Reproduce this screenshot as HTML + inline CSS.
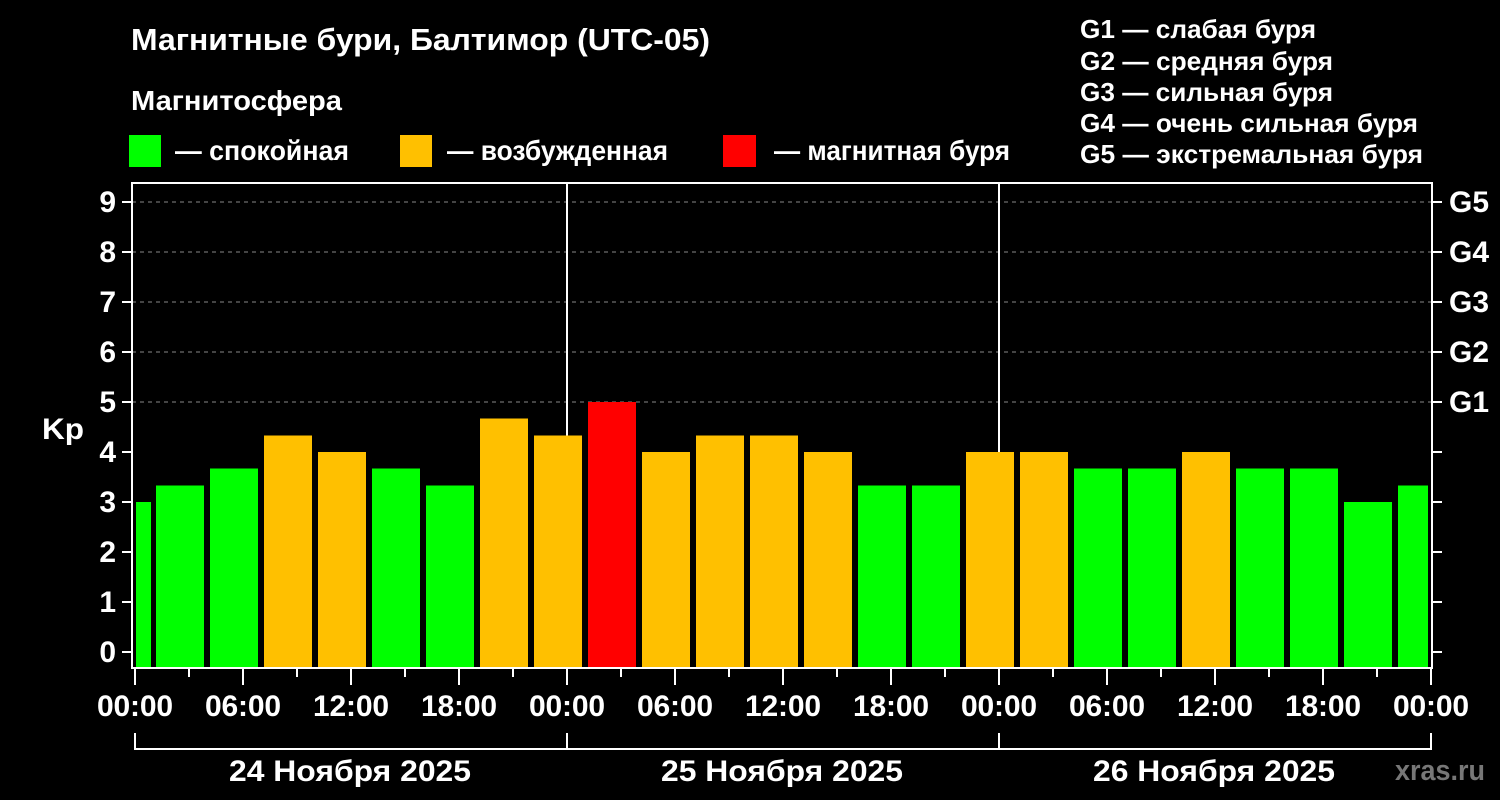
<!DOCTYPE html>
<html><head><meta charset="utf-8"><style>
html,body{margin:0;padding:0;background:#000;width:1500px;height:800px;overflow:hidden}
svg{display:block}
text{font-family:"Liberation Sans",Arial,sans-serif;font-weight:bold;fill:#fff}
</style></head><body>
<svg width="1500" height="800" viewBox="0 0 1500 800" xmlns="http://www.w3.org/2000/svg">
<rect width="1500" height="800" fill="#000"/>
<text x="131" y="50" font-size="31" textLength="579" lengthAdjust="spacingAndGlyphs">Магнитные бури, Балтимор (UTC-05)</text>
<text x="131" y="110" font-size="28" textLength="211" lengthAdjust="spacingAndGlyphs">Магнитосфера</text>
<rect x="129" y="135" width="32" height="32" fill="#00ff00"/>
<text x="175" y="160" font-size="28" textLength="174" lengthAdjust="spacingAndGlyphs">— спокойная</text>
<rect x="400" y="135" width="32" height="32" fill="#ffc000"/>
<text x="447" y="160" font-size="28" textLength="221" lengthAdjust="spacingAndGlyphs">— возбужденная</text>
<rect x="723" y="135" width="33" height="32" fill="#ff0000"/>
<text x="774" y="160" font-size="28" textLength="236" lengthAdjust="spacingAndGlyphs">— магнитная буря</text>
<g font-size="26">
<text x="1080" y="38" textLength="236" lengthAdjust="spacingAndGlyphs">G1 — слабая буря</text>
<text x="1080" y="70" textLength="253" lengthAdjust="spacingAndGlyphs">G2 — средняя буря</text>
<text x="1080" y="101" textLength="253" lengthAdjust="spacingAndGlyphs">G3 — сильная буря</text>
<text x="1080" y="132" textLength="338" lengthAdjust="spacingAndGlyphs">G4 — очень сильная буря</text>
<text x="1080" y="163" textLength="343" lengthAdjust="spacingAndGlyphs">G5 — экстремальная буря</text>
</g>
<g stroke="#888" stroke-width="1" stroke-dasharray="4,4">
<line x1="132" y1="402" x2="1432" y2="402"/>
<line x1="132" y1="352" x2="1432" y2="352"/>
<line x1="132" y1="302" x2="1432" y2="302"/>
<line x1="132" y1="252" x2="1432" y2="252"/>
<line x1="132" y1="202" x2="1432" y2="202"/>
</g>
<line x1="567" y1="183" x2="567" y2="668" stroke="#fff" stroke-width="2"/>
<line x1="999" y1="183" x2="999" y2="668" stroke="#fff" stroke-width="2"/>
<g>
<rect x="136" y="502" width="15" height="166" fill="#00ff00"/>
<rect x="156" y="485.5" width="48" height="182.5" fill="#00ff00"/>
<rect x="210" y="468.5" width="48" height="199.5" fill="#00ff00"/>
<rect x="264" y="435.5" width="48" height="232.5" fill="#ffc000"/>
<rect x="318" y="452" width="48" height="216" fill="#ffc000"/>
<rect x="372" y="468.5" width="48" height="199.5" fill="#00ff00"/>
<rect x="426" y="485.5" width="48" height="182.5" fill="#00ff00"/>
<rect x="480" y="418.5" width="48" height="249.5" fill="#ffc000"/>
<rect x="534" y="435.5" width="48" height="232.5" fill="#ffc000"/>
<rect x="588" y="402" width="48" height="266" fill="#ff0000"/>
<rect x="642" y="452" width="48" height="216" fill="#ffc000"/>
<rect x="696" y="435.5" width="48" height="232.5" fill="#ffc000"/>
<rect x="750" y="435.5" width="48" height="232.5" fill="#ffc000"/>
<rect x="804" y="452" width="48" height="216" fill="#ffc000"/>
<rect x="858" y="485.5" width="48" height="182.5" fill="#00ff00"/>
<rect x="912" y="485.5" width="48" height="182.5" fill="#00ff00"/>
<rect x="966" y="452" width="48" height="216" fill="#ffc000"/>
<rect x="1020" y="452" width="48" height="216" fill="#ffc000"/>
<rect x="1074" y="468.5" width="48" height="199.5" fill="#00ff00"/>
<rect x="1128" y="468.5" width="48" height="199.5" fill="#00ff00"/>
<rect x="1182" y="452" width="48" height="216" fill="#ffc000"/>
<rect x="1236" y="468.5" width="48" height="199.5" fill="#00ff00"/>
<rect x="1290" y="468.5" width="48" height="199.5" fill="#00ff00"/>
<rect x="1344" y="502" width="48" height="166" fill="#00ff00"/>
<rect x="1398" y="485.5" width="30" height="182.5" fill="#00ff00"/>
</g>
<rect x="132" y="183" width="1300" height="485" fill="none" stroke="#fff" stroke-width="2"/>
<g stroke="#fff" stroke-width="2">
<line x1="122" y1="652" x2="132" y2="652"/><line x1="122" y1="602" x2="132" y2="602"/>
<line x1="122" y1="552" x2="132" y2="552"/><line x1="122" y1="502" x2="132" y2="502"/>
<line x1="122" y1="452" x2="132" y2="452"/><line x1="122" y1="402" x2="132" y2="402"/>
<line x1="122" y1="352" x2="132" y2="352"/><line x1="122" y1="302" x2="132" y2="302"/>
<line x1="122" y1="252" x2="132" y2="252"/><line x1="122" y1="202" x2="132" y2="202"/>
<line x1="1432" y1="652" x2="1442" y2="652"/><line x1="1432" y1="602" x2="1442" y2="602"/>
<line x1="1432" y1="552" x2="1442" y2="552"/><line x1="1432" y1="502" x2="1442" y2="502"/>
<line x1="1432" y1="452" x2="1442" y2="452"/><line x1="1432" y1="402" x2="1442" y2="402"/>
<line x1="1432" y1="352" x2="1442" y2="352"/><line x1="1432" y1="302" x2="1442" y2="302"/>
<line x1="1432" y1="252" x2="1442" y2="252"/><line x1="1432" y1="202" x2="1442" y2="202"/>
<line x1="135" y1="669" x2="135" y2="685"/><line x1="189" y1="669" x2="189" y2="677"/>
<line x1="243" y1="669" x2="243" y2="685"/><line x1="297" y1="669" x2="297" y2="677"/>
<line x1="351" y1="669" x2="351" y2="685"/><line x1="405" y1="669" x2="405" y2="677"/>
<line x1="459" y1="669" x2="459" y2="685"/><line x1="513" y1="669" x2="513" y2="677"/>
<line x1="567" y1="669" x2="567" y2="685"/><line x1="621" y1="669" x2="621" y2="677"/>
<line x1="675" y1="669" x2="675" y2="685"/><line x1="729" y1="669" x2="729" y2="677"/>
<line x1="783" y1="669" x2="783" y2="685"/><line x1="837" y1="669" x2="837" y2="677"/>
<line x1="891" y1="669" x2="891" y2="685"/><line x1="945" y1="669" x2="945" y2="677"/>
<line x1="999" y1="669" x2="999" y2="685"/><line x1="1053" y1="669" x2="1053" y2="677"/>
<line x1="1107" y1="669" x2="1107" y2="685"/><line x1="1161" y1="669" x2="1161" y2="677"/>
<line x1="1215" y1="669" x2="1215" y2="685"/><line x1="1269" y1="669" x2="1269" y2="677"/>
<line x1="1323" y1="669" x2="1323" y2="685"/><line x1="1377" y1="669" x2="1377" y2="677"/>
<line x1="1431" y1="669" x2="1431" y2="685"/>
<polyline points="135,733 135,749 1431,749 1431,733" fill="none"/>
<line x1="567" y1="733" x2="567" y2="749"/><line x1="999" y1="733" x2="999" y2="749"/>
</g>
<g font-size="30" text-anchor="end">
<text x="116" y="662">0</text><text x="116" y="612">1</text><text x="116" y="562">2</text>
<text x="116" y="512">3</text><text x="116" y="462">4</text><text x="116" y="412">5</text>
<text x="116" y="362">6</text><text x="116" y="312">7</text><text x="116" y="262">8</text>
<text x="116" y="212">9</text>
</g>
<text x="42" y="439" font-size="30" textLength="42" lengthAdjust="spacingAndGlyphs">Kp</text>
<g font-size="30">
<text x="1449" y="412">G1</text><text x="1449" y="362">G2</text><text x="1449" y="312">G3</text>
<text x="1449" y="262">G4</text><text x="1449" y="212">G5</text>
</g>
<g font-size="30" text-anchor="middle" lengthAdjust="spacingAndGlyphs">
<text x="135" y="716" textLength="76">00:00</text><text x="243" y="716" textLength="76">06:00</text><text x="351" y="716" textLength="76">12:00</text>
<text x="459" y="716" textLength="76">18:00</text><text x="567" y="716" textLength="76">00:00</text><text x="675" y="716" textLength="76">06:00</text>
<text x="783" y="716" textLength="76">12:00</text><text x="891" y="716" textLength="76">18:00</text><text x="999" y="716" textLength="76">00:00</text>
<text x="1107" y="716" textLength="76">06:00</text><text x="1215" y="716" textLength="76">12:00</text><text x="1323" y="716" textLength="76">18:00</text>
<text x="1431" y="716" textLength="76">00:00</text>
</g>
<g font-size="30">
<text x="229" y="781" textLength="242" lengthAdjust="spacingAndGlyphs">24 Ноября 2025</text>
<text x="661" y="781" textLength="242" lengthAdjust="spacingAndGlyphs">25 Ноября 2025</text>
<text x="1093" y="781" textLength="242" lengthAdjust="spacingAndGlyphs">26 Ноября 2025</text>
</g>
<text x="1395" y="780" font-size="29" style="fill:#777" textLength="90" lengthAdjust="spacingAndGlyphs">xras.ru</text>
</svg>
</body></html>
